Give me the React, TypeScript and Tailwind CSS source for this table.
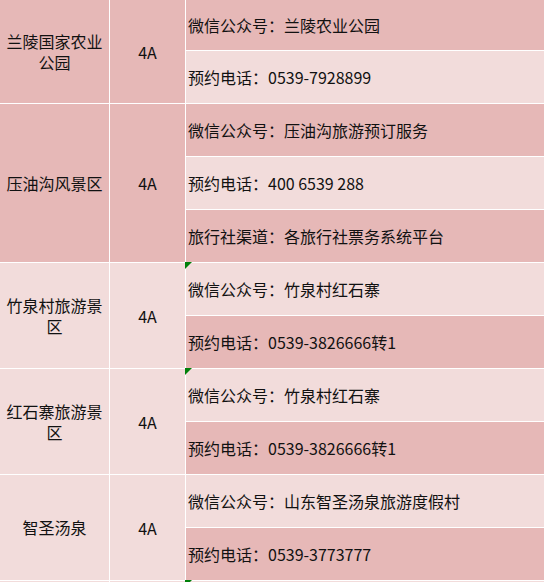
import React from 'react'

type Spot = {
  name: string
  level: string
  dark: boolean
  rows: { text: string; flag?: boolean }[]
}

const SPOTS: Spot[] = [
  {
    name: '兰陵国家农业公园',
    level: '4A',
    dark: true,
    rows: [{ text: '微信公众号：兰陵农业公园' }, { text: '预约电话：0539-7928899' }],
  },
  {
    name: '压油沟风景区',
    level: '4A',
    dark: true,
    rows: [
      { text: '微信公众号：压油沟旅游预订服务' },
      { text: '预约电话：400 6539 288' },
      { text: '旅行社渠道：各旅行社票务系统平台' },
    ],
  },
  {
    name: '竹泉村旅游景区',
    level: '4A',
    dark: false,
    rows: [{ text: '微信公众号：竹泉村红石寨', flag: true }, { text: '预约电话：0539-3826666转1' }],
  },
  {
    name: '红石寨旅游景区',
    level: '4A',
    dark: false,
    rows: [{ text: '微信公众号：竹泉村红石寨', flag: true }, { text: '预约电话：0539-3826666转1' }],
  },
  {
    name: '智圣汤泉',
    level: '4A',
    dark: false,
    rows: [{ text: '微信公众号：山东智圣汤泉旅游度假村' }, { text: '预约电话：0539-3773777' }],
  },
]

const SPAN: Record<number, string> = { 2: 'row-span-2', 3: 'row-span-3' }

function Flag() {
  return (
    <span className="absolute -left-px -top-px h-0 w-0 border-t-[7px] border-r-[7px] border-t-[#00800a] border-r-transparent" />
  )
}

export default function App() {
  // alternating stripes run across the whole info column
  let stripe = 0

  return (
    <div
      className="h-[582px] w-[544px] overflow-hidden bg-white text-[16px] text-[#111]"
      style={{ fontFamily: '"Noto Sans CJK SC", "Liberation Sans", sans-serif' }}
    >
      <div className="grid grid-cols-[109px_75px_1fr] grid-rows-[50px_repeat(12,52px)] gap-px bg-white">
        {SPOTS.map((s) => {
          const bg = s.dark ? 'bg-[#e6b8b7]' : 'bg-[#f2dcdb]'
          return (
            <React.Fragment key={s.name}>
              <div className={`${SPAN[s.rows.length]} ${bg} flex items-center justify-center px-1 text-center leading-[21px]`}>
                {s.name}
              </div>
              <div className={`${SPAN[s.rows.length]} ${bg} flex items-center justify-center`}>{s.level}</div>
              {s.rows.map((r) => {
                const cell = stripe++ % 2 === 0 ? 'bg-[#e6b8b7]' : 'bg-[#f2dcdb]'
                return (
                  <div key={r.text} className={`relative col-start-3 flex items-center whitespace-nowrap pl-[2px] ${cell}`}>
                    {r.flag && <Flag />}
                    {r.text}
                  </div>
                )
              })}
            </React.Fragment>
          )
        })}
        <div className="bg-[#f2dcdb]" />
        <div className="bg-[#f2dcdb]" />
        <div className="relative bg-[#f2dcdb]">
          <Flag />
        </div>
      </div>
    </div>
  )
}
